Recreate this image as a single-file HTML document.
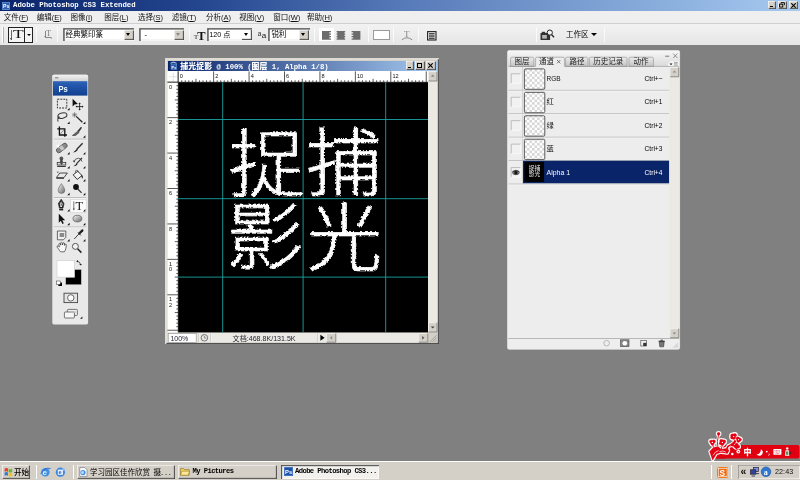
<!DOCTYPE html>
<html lang="zh-CN">
<head>
<meta charset="utf-8">
<title>Adobe Photoshop CS3 Extended</title>
<style>
*{box-sizing:border-box;margin:0;padding:0}
html,body{width:800px;height:480px;overflow:hidden;background:#808080}
#menubar,#optbar,#taskbar,#doc,#title,#chan,#tools,#ime,#docsvg{will-change:transform}
body{position:relative;font-family:"Liberation Sans","Noto Sans CJK SC",sans-serif;font-size:7.5px;color:#000;line-height:1}
.a{position:absolute}
.t{position:absolute;white-space:nowrap;line-height:1}
.mono{font-family:"Liberation Mono","Noto Sans CJK SC",monospace;font-weight:bold}
/* title */
#title{left:0;top:0;width:800px;height:11px;background:linear-gradient(90deg,#0a246a 0%,#24468f 25%,#5679b8 50%,#a6caf0 100%)}
.cbtn{position:absolute;background:#d4d0c8;box-shadow:inset 0.6px 0.6px 0 #fff,inset -0.6px -0.6px 0 #404040,inset -1.2px -1.2px 0 #808080}
#menubar{left:0;top:11px;width:800px;height:12.5px;background:#efefef;border-bottom:0.7px solid #cfcfcf}
#menubar .t{top:3px;margin-left:-0.8px;font-size:7.5px;color:#111}
#optbar{left:0;top:23.5px;width:800px;height:21.3px;background:linear-gradient(#f2f2f2,#e6e6e6)}
.sep{position:absolute;width:1.2px;background:linear-gradient(90deg,#b0b0b0 50%,#fafafa 50%)}
.combo{position:absolute;background:#fff;box-shadow:inset 0.8px 0.8px 0 #808080,inset 1.6px 1.6px 0 #404040,inset -0.7px -0.7px 0 #fff,inset -1.3px -1.3px 0 #d4d0c8}
.combo .dd{position:absolute;right:0.9px;top:1.6px;bottom:0.9px;width:9.8px;background:#d4d0c8;box-shadow:inset 0.6px 0.6px 0 #fff,inset -0.6px -0.6px 0 #404040,inset -1.2px -1.2px 0 #808080}
.combo .dd:after{content:"";position:absolute;left:2.2px;top:3.3px;border:2.7px solid transparent;border-top:3.1px solid #000;border-bottom:0}
.combo.dis .dd:after{border-top-color:#888}
/* taskbar */
#taskbar{left:0;top:460.5px;width:800px;height:19.5px;background:#d4d0c8;border-top:0.7px solid #fff}
.tb{position:absolute;top:3.2px;height:13.6px;background:#d4d0c8;box-shadow:inset 0.6px 0.6px 0 #fff,inset -0.6px -0.6px 0 #404040,inset -1.2px -1.2px 0 #808080}
.tb.act{background:#f2f1ee;box-shadow:inset 0.6px 0.6px 0 #404040,inset 1.2px 1.2px 0 #808080,inset -0.6px -0.6px 0 #fff}
.tsep{position:absolute;top:3px;height:14px;width:1.3px;background:linear-gradient(90deg,#808080 50%,#fff 50%)}
</style>
</head>
<body>
<!-- TITLE BAR -->
<div id="title" class="a">
  <svg class="a" style="left:2px;top:1.5px" width="8" height="8" viewBox="0 0 8 8"><rect width="8" height="8" fill="#2c5fb4"/><rect x=".4" y=".4" width="7.2" height="7.2" fill="none" stroke="#7fa8e0" stroke-width=".5"/><text x="1" y="6.2" font-family="Liberation Sans,sans-serif" font-size="5.2" font-weight="bold" fill="#fff">Ps</text></svg>
  <div class="t mono" style="left:13px;top:1.6px;font-size:7.3px;color:#fff">Adobe Photoshop CS3 Extended</div>
  <div class="cbtn" style="left:768px;top:1.3px;width:8.4px;height:8.1px"><div class="a" style="left:2px;top:5px;width:3.4px;height:1.2px;background:#000"></div></div>
  <div class="cbtn" style="left:777.6px;top:1.3px;width:9.4px;height:8.1px"><svg class="a" style="left:1.5px;top:1.2px" width="6" height="6" viewBox="0 0 6 6"><path d="M2 .6h3.4v2.6M2 .6v1" fill="none" stroke="#000" stroke-width=".9"/><rect x=".6" y="2.2" width="3.2" height="2.8" fill="none" stroke="#000" stroke-width=".9"/></svg></div>
  <div class="cbtn" style="left:789px;top:1.3px;width:9.2px;height:8.1px"><svg class="a" style="left:1.8px;top:1.5px" width="5" height="5" viewBox="0 0 5 5"><path d="M.3 .3L4.7 4.7M4.7 .3L.3 4.7" stroke="#000" stroke-width="1.1"/></svg></div>
</div>
<!-- MENU BAR -->
<div id="menubar" class="a">
  <div class="t" style="left:4.5px">文件(<u>F</u>)</div>
  <div class="t" style="left:37.5px">编辑(<u>E</u>)</div>
  <div class="t" style="left:71.2px">图像(<u>I</u>)</div>
  <div class="t" style="left:105px">图层(<u>L</u>)</div>
  <div class="t" style="left:138.7px">选择(<u>S</u>)</div>
  <div class="t" style="left:172.5px">滤镜(<u>T</u>)</div>
  <div class="t" style="left:206.7px">分析(<u>A</u>)</div>
  <div class="t" style="left:240px">视图(<u>V</u>)</div>
  <div class="t" style="left:274px">窗口(<u>W</u>)</div>
  <div class="t" style="left:307.7px">帮助(<u>H</u>)</div>
</div>
<!-- OPTIONS BAR -->
<div id="optbar" class="a">
  <div class="a" style="left:2px;top:2.5px;width:1.6px;height:16.5px;background:linear-gradient(90deg,#fff 50%,#b4b4b4 50%)"></div>
  <!-- tool preset picker -->
  <div class="a" style="left:8px;top:2.6px;width:25px;height:16.6px;border:0.8px solid #222;background:#f4f4f4"></div>
  <div class="a" style="left:24.4px;top:2.6px;width:0.8px;height:16.6px;background:#222"></div>
  <div class="t" style="left:13.200px;top:4.200px;font-family:'Liberation Serif',serif;font-size:12.600px;color:#111;transform:scaleX(1.38);transform-origin:0 0">T</div>
  <div class="a" style="left:11.400px;top:6.200px;width:0.900px;height:9.400px;background:#666"></div>
  <div class="a" style="left:10.400px;top:14px;border:1.400px solid transparent;border-top:2px solid #444;border-bottom:0"></div>
  <div class="a" style="left:26.600px;top:9.800px;border:2.200px solid transparent;border-top:2.600px solid #000;border-bottom:0"></div>
  <div class="sep" style="left:36.2px;top:2.800px;height:15.400px"></div>
  <!-- orientation toggle -->
  <div class="t" style="left:46.2px;top:6.4px;font-family:'Liberation Serif',serif;font-size:8px;color:#777">T</div>
  <div class="a" style="left:45.2px;top:7px;width:0.8px;height:6.4px;background:#888"></div>
  <div class="a" style="left:45.2px;top:13.2px;width:6px;height:0.8px;background:#888"></div>
  <div class="a" style="left:44.2px;top:12px;border:1.1px solid transparent;border-top:1.6px solid #777;border-bottom:0"></div>
  <div class="a" style="left:50.6px;top:12.5px;border:1.1px solid transparent;border-left:1.6px solid #777;border-right:0"></div>
  <div class="sep" style="left:57.3px;top:2.800px;height:15.400px"></div>
  <!-- font family -->
  <div class="combo" style="left:62.8px;top:4.4px;width:71.6px;height:12.4px"><div class="t" style="left:2.6px;top:2.6px;font-size:7.5px">经典繁印篆</div><div class="dd"></div></div>
  <div class="combo dis" style="left:139.4px;top:4.4px;width:45px;height:12.4px"><div class="t" style="left:5px;top:2.4px;font-size:7.5px">-</div><div class="dd"></div></div>
  <div class="sep" style="left:189px;top:2.800px;height:15.400px"></div>
  <!-- size -->
  <div class="t" style="left:193.800px;top:10.200px;font-family:'Liberation Serif',serif;font-weight:bold;font-size:7px;color:#666">T</div>
  <div class="t" style="left:197.200px;top:5.600px;font-family:'Liberation Serif',serif;font-weight:bold;font-size:12.400px;color:#111">T</div>
  <div class="combo" style="left:206.6px;top:4.4px;width:45.8px;height:12.4px"><div class="t" style="left:2.600px;top:2.600px;font-size:7.200px">120 点</div><div class="dd" style="background:#fff;box-shadow:inset -0.700px -0.700px 0 #404040,inset -1.300px -1.300px 0 #909090"></div></div>
  <!-- aa -->
  <div class="t" style="left:257.800px;top:7px;font-size:6.400px;color:#222">a</div>
  <div class="t" style="left:261.700px;top:7.600px;font-size:8px;color:#111">a</div>
  <div class="combo" style="left:268.2px;top:4.4px;width:41.6px;height:12.4px"><div class="t" style="left:3.2px;top:2.6px;font-size:7.5px">锐利</div><div class="dd"></div></div>
  <div class="sep" style="left:313.6px;top:2.800px;height:15.400px"></div>
  <!-- align -->
  <div class="a" style="left:318.800px;top:4.200px;width:15.400px;height:12.800px;background:#fff"></div>
  <svg class="a" style="left:322px;top:7px" width="40" height="9" viewBox="0 0 40 9"><g fill="#6c6c6c"><path d="M0.00 0.00h9.00v1.250h-9.00zM0.00 1.25h7.40v1.250h-7.40zM0.00 2.50h9.00v1.250h-9.00zM0.00 3.75h7.40v1.250h-7.40zM0.00 5.00h9.00v1.250h-9.00zM0.00 6.25h7.40v1.250h-7.40zM0.00 7.50h9.00v1.250h-9.00z"/><path d="M14.60 0.00h8.60v1.250h-8.60zM15.40 1.25h7.00v1.250h-7.00zM14.60 2.50h8.60v1.250h-8.60zM15.40 3.75h7.00v1.250h-7.00zM14.60 5.00h8.60v1.250h-8.60zM15.40 6.25h7.00v1.250h-7.00zM14.60 7.50h8.60v1.250h-8.60z"/><path d="M29.60 0.00h8.80v1.250h-8.80zM31.20 1.25h7.20v1.250h-7.20zM29.60 2.50h8.80v1.250h-8.80zM31.20 3.75h7.20v1.250h-7.20zM29.60 5.00h8.80v1.250h-8.80zM31.20 6.25h7.20v1.250h-7.20zM29.60 7.50h8.80v1.250h-8.80z"/></g></svg>
  <div class="sep" style="left:368.200px;top:2.800px;height:15.400px"></div>
  <!-- color -->
  <div class="a" style="left:373px;top:5.600px;width:17px;height:10.600px;background:#fff;border:0.800px solid #9a9a9a"></div>
  <div class="sep" style="left:393.200px;top:2.800px;height:15.400px"></div>
  <!-- warp -->
  <svg class="a" style="left:401px;top:6px" width="12" height="11" viewBox="0 0 12 11"><path d="M.8 9.800Q6 5.800 11.200 9.800" fill="none" stroke="#888" stroke-width="1"/><text x="2.900" y="7.400" font-family="Liberation Serif,serif" font-size="9" fill="#858585">T</text></svg>
  <div class="sep" style="left:418.200px;top:2.800px;height:15.400px"></div>
  <!-- palettes -->
  <svg class="a" style="left:426.600px;top:6.600px" width="10" height="10" viewBox="0 0 10 10"><rect x=".6" y=".6" width="8.400" height="8.400" fill="#e8e8e8" stroke="#222" stroke-width="1.100"/><path d="M2 2.600h5.600M2 4.200h5.600M2 5.800h5.600M2 7.400h5.600" stroke="#222" stroke-width=".9"/></svg>
  <div class="sep" style="left:535.600px;top:2.800px;height:15.400px"></div>
  <!-- bridge/workspace -->
  <svg class="a" style="left:540px;top:5.400px" width="15" height="12" viewBox="0 0 15 12"><rect x=".5" y="4" width="9.600" height="7" fill="#333"/><rect x="1.800" y="2.800" width="3.400" height="1.600" fill="#333"/><rect x="2.200" y="6" width="4.600" height="3.600" fill="#b8b8b8"/><circle cx="9.800" cy="3.600" r="2.600" fill="#f4f4f4" stroke="#222" stroke-width="1"/><path d="M11.600 5.600l2.400 2.600" stroke="#222" stroke-width="1.400"/></svg>
  <div class="t" style="left:566px;top:7px;font-size:7.500px">工作区</div>
  <div class="a" style="left:591px;top:9.400px;border:3.300px solid transparent;border-top:3.600px solid #000;border-bottom:0"></div>
  <div class="sep" style="left:604.200px;top:2.800px;height:15.400px"></div>
</div>
<!-- TOOLS -->
<div id="tools" class="a" style="left:52px;top:74px;width:37px;height:251px">
<svg class="a" style="left:0;top:0" width="37" height="251" viewBox="52 74 37 251">
<defs>
<linearGradient id="psb" x1="0" y1="0" x2="0" y2="1"><stop offset="0" stop-color="#2f63b8"/><stop offset=".5" stop-color="#1d4fa4"/><stop offset="1" stop-color="#12408e"/></linearGradient>
<linearGradient id="gry" x1="0" y1="0" x2="1" y2="1"><stop offset="0" stop-color="#f4f4f4"/><stop offset="1" stop-color="#6a6a6a"/></linearGradient>
<linearGradient id="grip" x1="0" y1="0" x2="0" y2="1"><stop offset="0" stop-color="#f2f2f2"/><stop offset="1" stop-color="#d2d2d2"/></linearGradient>
</defs>
<rect x="52.3" y="74.8" width="35.8" height="249.6" rx="1.6" fill="#e9e9e9"/>
<rect x="52.3" y="74.8" width="35.8" height="6.6" rx="1.6" fill="url(#grip)"/>
<rect x="55" y="77.2" width="3.4" height="1.2" fill="#8a8a8a"/>
<rect x="53" y="81.2" width="34.4" height="14.4" fill="url(#psb)"/>
<text x="58.400" y="92.200" font-family="Liberation Sans,sans-serif" font-weight="bold" font-size="9.200" fill="#f4f8ff" textLength="9.300" lengthAdjust="spacingAndGlyphs">Ps</text>
<!-- separators -->
<g stroke="#a6a6a6" stroke-width=".8"><path d="M54 139.200h32.400M54 197.600h32.400M54 227h32.400"/></g>
<g stroke="#fbfbfb" stroke-width=".7"><path d="M54 140h32.4M54 198.4h32.4M54 227.8h32.4"/></g>
<!-- selected type tool bg -->
<rect x="70.6" y="199.4" width="15.8" height="12.8" fill="#fbfbfb" stroke="#cfcfcf" stroke-width=".5"/>
<g fill="#111"><path d="M69.6 107.85v2.300h-2.300z"/><path d="M69.6 121.60v2.300h-2.300z"/><path d="M85.4 121.60v2.300h-2.300z"/><path d="M85.4 135.35v2.300h-2.300z"/><path d="M69.6 152.10v2.300h-2.300z"/><path d="M85.4 152.10v2.300h-2.300z"/><path d="M69.6 166.10v2.300h-2.300z"/><path d="M85.4 166.10v2.300h-2.300z"/><path d="M69.6 179.10v2.300h-2.300z"/><path d="M85.4 179.10v2.300h-2.300z"/><path d="M69.6 192.85v2.300h-2.300z"/><path d="M85.4 192.85v2.300h-2.300z"/><path d="M69.6 209.10v2.300h-2.300z"/><path d="M85.4 209.10v2.300h-2.300z"/><path d="M69.6 222.85v2.300h-2.300z"/><path d="M85.4 222.85v2.300h-2.300z"/><path d="M69.6 239.10v2.300h-2.300z"/><path d="M85.4 239.10v2.300h-2.300z"/><path d="M82.4 316.50v2.300h-2.300z"/></g>
<!-- row1: marquee, move -->
<rect x="57.4" y="99.2" width="9.4" height="8.8" fill="none" stroke="#333" stroke-width="1" stroke-dasharray="1.9 1.1"/>
<path d="M72.6 98.8v7.6l2-1.9 3.3-.4z" fill="#111"/>
<path d="M79.6 103.4v6.4M76.4 106.6h6.4" stroke="#222" stroke-width=".9"/>
<path d="M79.6 102.6l1.2 1.5h-2.4zM79.6 110.6l1.2-1.5h-2.4zM75.6 106.6l1.5-1.2v2.4zM83.6 106.6l-1.5-1.2v2.4z" fill="#222"/>
<!-- row2: lasso, wand -->
<ellipse cx="62.4" cy="115.6" rx="4.6" ry="2.7" transform="rotate(-14 62.4 115.6)" fill="none" stroke="#333" stroke-width="1"/>
<path d="M58.6 117.4q-1.4 1.6-.6 4.2" fill="none" stroke="#333" stroke-width="1"/>
<circle cx="58.7" cy="117.6" r="1" fill="none" stroke="#333" stroke-width=".6"/>
<path d="M76.2 116.4l6.2 5.8" stroke="#222" stroke-width="1.3"/>
<path d="M74.6 112.2v5.4M72 114.9h5.2M72.8 113.1l3.6 3.6M76.4 113.1l-3.6 3.6" stroke="#555" stroke-width=".6"/>
<!-- row3: crop, slice -->
<path d="M59.4 126.6v8.4h7.6M57.2 128.8h7.6v8" fill="none" stroke="#111" stroke-width="1.3"/>
<path d="M60 134.4l4.4-5" stroke="#444" stroke-width=".6"/>
<path d="M72.4 135.6l5.4-4.4 1.4 1.2-3.6 3z" fill="#666" stroke="#222" stroke-width=".5"/>
<path d="M77.4 131l3.6-4.2 1 .9-3 4.4z" fill="#333"/>
<!-- row4: heal, brush -->
<rect x="55.6" y="145.6" width="12.4" height="4.8" rx="2.4" transform="rotate(-38 61.8 148)" fill="#8a8a8a" stroke="#444" stroke-width=".7"/>
<rect x="60" y="145.8" width="3.6" height="4.4" transform="rotate(-38 61.8 148)" fill="#c8c8c8"/>
<path d="M56 146l2.6-1.4 .6 3.4z" fill="#fff"/>
<path d="M82.6 143.2l-6 6.2" stroke="#333" stroke-width="1.4"/>
<path d="M76.8 149l-3.6 3.4q2.6.2 4.6-2.4z" fill="#222"/>
<!-- row5: stamp, history brush -->
<circle cx="61.4" cy="158.4" r="1.9" fill="#555"/>
<path d="M60.4 159.6h2l.6 3h-3.2z" fill="#444"/>
<rect x="57.2" y="162.4" width="8.6" height="2.6" fill="#ddd" stroke="#222" stroke-width=".7"/>
<path d="M57.2 166.4h8.6" stroke="#222" stroke-width="1"/>
<path d="M60 163.2h3l-1.5 1.6z" fill="#111"/>
<path d="M82 157.8l-5.6 6" stroke="#333" stroke-width="1.2"/>
<path d="M76.8 163.4l-3.2 2.8q2.4.2 4-2z" fill="#222"/>
<path d="M74 161.8q1-3.6 4.4-3.6 3.2 0 3.6 3.4" fill="none" stroke="#444" stroke-width=".8"/>
<path d="M72.8 160.6l2.4.2-1 2z" fill="#333"/>
<!-- row6: eraser, bucket -->
<path d="M59.8 173h7.6l-3.4 4.6h-7.6z" fill="#e8e8e8" stroke="#222" stroke-width=".8"/>
<path d="M56.4 177.6h7.6v1.4h-7.6z" fill="#555"/>
<path d="M57 171.4l1.6 1.6M58.6 171.4l-1.6 1.6" stroke="#444" stroke-width=".5"/>
<path d="M73.2 174.8l4.6-3.6 4.2 4.4-4.8 3.8z" fill="#f4f4f4" stroke="#222" stroke-width=".9"/>
<path d="M75.4 172.8q-.6-2.8 1.6-2.6 1.600 .2 1.200 2.4" fill="none" stroke="#333" stroke-width=".6"/>
<path d="M81.400 174.600q2 1.200 1.400 4.400-1.800-1.200-1.400-4.400z" fill="#111"/>
<!-- row7: blur, dodge -->
<path d="M61.4 183.600q-3.400 4.600-3.400 6.600a3.400 3.200 0 0 0 6.800 0q0-2-3.400-6.600z" fill="url(#gry)" stroke="#666" stroke-width=".6"/>
<circle cx="76" cy="187" r="2.900" fill="#111"/>
<path d="M77.800 189l3.800 3.800" stroke="#333" stroke-width="1.200"/>
<!-- row8: pen, type -->
<path d="M61.200 199.200l2.800 4.400-1 4.400h-3.600l-1-4.400z" fill="#2a2a2a" stroke="#111" stroke-width=".6"/>
<path d="M61.200 201.200l1.400 2.800-.7 3h-1.400l-.7-3z" fill="#f4f4f4"/>
<path d="M61.200 201v3.600" stroke="#222" stroke-width=".5"/><circle cx="61.200" cy="205" r=".7" fill="#222"/>
<path d="M59.200 208.600h4v1.800h-4z" fill="#222"/>
<text x="75.400" y="210.200" font-family="Liberation Serif,serif" font-size="12.500" fill="#111">T</text>
<path d="M73.800 201.400v8" stroke="#555" stroke-width=".8"/><path d="M72.800 208.600h2l-1 1.800z" fill="#444"/>
<!-- row9: path select, ellipse -->
<path d="M58.800 213.800v9l2.100-2 1.500 3.200 1.400-.7-1.500-3.100h2.900z" fill="#111"/>
<ellipse cx="77.400" cy="218.600" rx="4.400" ry="3.300" fill="url(#gry)" stroke="#555" stroke-width=".7"/>
<!-- row10: notes, eyedropper -->
<path d="M57.400 231h8.400v6.400l-2.400 2.400h-6z" fill="#f0f0f0" stroke="#444" stroke-width=".8"/>
<rect x="59.600" y="233" width="4.600" height="4" fill="#8a8a8a"/>
<path d="M82.400 230.400l-3 3" stroke="#222" stroke-width="2.200" stroke-linecap="round"/>
<path d="M79.600 233.200l-5.400 5.800" stroke="#444" stroke-width="1"/>
<path d="M78 232.600l2.800 2.800" stroke="#222" stroke-width="1"/>
<!-- row11: hand, zoom -->
<path d="M58.800 249.400q-2.400-2.600-1.600-3.400 1-.6 2.200 1l-.6-3q.6-1.200 1.500-.3l.5 1.500-.1-2.400q.8-1 1.600 0l.3 2.200.4-2q.9-.8 1.500.2v2.200l.7-1.200q.9-.4 1.100.6-.1 2.600-.6 4-.4 1.800-1.300 3h-3.800q-1-.9-1.800-2.400z" fill="#f8f8f8" stroke="#333" stroke-width=".7"/>
<circle cx="75.400" cy="246.400" r="3" fill="#f2f2f2" stroke="#555" stroke-width="1"/>
<path d="M77.600 248.800l3.800 3.800" stroke="#222" stroke-width="1.500"/>
<!-- swatches -->
<rect x="65.600" y="269.400" width="15.800" height="15.400" fill="#000" stroke="#d0d0d0" stroke-width=".6"/>
<rect x="57" y="260.600" width="17.400" height="16.600" fill="#fff" stroke="#d4d4d4" stroke-width=".8"/>
<path d="M77 261.200q3 .2 3.600 3.400" fill="none" stroke="#333" stroke-width=".8"/>
<path d="M76.200 261.200l1.800-1.300v2.600zM80.600 265.600l-1.400-1.600h2.800z" fill="#222"/>
<rect x="58.400" y="282.600" width="3.600" height="3.400" fill="#000"/>
<rect x="56.600" y="281" width="3.600" height="3.400" fill="#fff" stroke="#333" stroke-width=".5"/>
<!-- quick mask -->
<rect x="64" y="293.200" width="13.600" height="9.400" fill="#e4e4e4" stroke="#444" stroke-width=".9"/>
<circle cx="70.800" cy="297.900" r="3.200" fill="#fff" stroke="#444" stroke-width=".8"/>
<!-- screen mode -->
<rect x="67.400" y="309.400" width="10" height="6" rx=".8" fill="#efefef" stroke="#555" stroke-width=".8"/>
<rect x="64.400" y="312" width="10" height="6" rx=".8" fill="#f6f6f6" stroke="#555" stroke-width=".8"/>
<rect x="69.600" y="311.400" width="6.400" height="1.200" fill="#bbb"/>
</svg>
</div>
<!-- DOC -->
<div id="doc" class="a" style="left:165px;top:58px;width:274.4px;height:285.6px;background:#d4d0c8;box-shadow:inset 0.7px 0.7px 0 #d4d0c8,inset 1.3px 1.3px 0 #fff,inset -0.7px -0.7px 0 #404040,inset -1.3px -1.3px 0 #808080">
<div class="a" style="left:2.5px;top:2.5px;width:269.4px;height:10.4px;background:linear-gradient(90deg,#0a246a,#a6caf0)"></div>
<svg class="a" style="left:4px;top:3.4px" width="9" height="9" viewBox="0 0 9 9"><path d="M1.400 1.800l3.200-1.200 3 1.200v1l-3-1-3.200 1z" fill="#9cc4f0"/><rect x="2" y="3" width="5.800" height="5.400" fill="#2a5cb0" stroke="#8fb6e8" stroke-width=".4"/><text x="2.600" y="7.600" font-family="Liberation Sans,sans-serif" font-size="3.800" font-weight="bold" fill="#fff">Ps</text></svg>
<div class="t mono" style="left:15.2px;top:4px;font-size:7.3px;color:#fff"><span style="font-family:'Noto Sans CJK SC',sans-serif;font-weight:900;font-size:7.900px;letter-spacing:0.100px">捕光捉影</span> @ 100% (<span style="font-family:'Noto Sans CJK SC',sans-serif;font-weight:900;font-size:7.900px">图层</span> 1, Alpha 1/8)</div>
<div class="cbtn" style="left:240.600px;top:3.400px;width:8.800px;height:8.200px"><div class="a" style="left:2px;top:5.200px;width:3.400px;height:1.200px;background:#000"></div></div>
<div class="cbtn" style="left:250.400px;top:3.400px;width:9.200px;height:8.200px"><div class="a" style="left:1.700px;top:1.500px;width:5.400px;height:5px;border:0.600px solid #000;border-top-width:1.300px"></div></div>
<div class="cbtn" style="left:261.200px;top:3.400px;width:9.600px;height:8.200px"><svg class="a" style="left:2.200px;top:1.600px" width="5" height="5" viewBox="0 0 5 5"><path d="M.3 .3L4.700 4.700M4.700 .3L.3 4.700" stroke="#000" stroke-width="1.100"/></svg></div>
</div>
<svg id="docsvg" class="a" style="left:167px;top:70px" width="272" height="274" viewBox="167 70 272 274">
<rect x="167.500" y="71" width="260.500" height="11.200" fill="#fff"/>
<rect x="167.500" y="71" width="10.700" height="261.500" fill="#fff"/>
<path d="M167.500 82.100h260.300M178.100 71v261.400" stroke="#333" stroke-width=".5"/>
<path d="M169.400 76.800h8.600M173.200 73v9" stroke="#999" stroke-width=".5" stroke-dasharray=".6 .6"/>
<path d="M178.20 71.40v10.60M181.74 80.30v1.70M185.29 80.30v1.70M188.83 80.30v1.70M192.37 80.30v1.70M195.92 78.80v3.20M199.46 80.30v1.70M203.00 80.30v1.70M206.55 80.30v1.70M210.09 80.30v1.70M213.63 71.40v10.60M217.18 80.30v1.70M220.72 80.30v1.70M224.26 80.30v1.70M227.81 80.30v1.70M231.35 78.80v3.20M234.89 80.30v1.70M238.44 80.30v1.70M241.98 80.30v1.70M245.52 80.30v1.70M249.07 71.40v10.60M252.61 80.30v1.70M256.15 80.30v1.70M259.70 80.30v1.70M263.24 80.30v1.70M266.78 78.80v3.20M270.33 80.30v1.70M273.87 80.30v1.70M277.42 80.30v1.70M280.96 80.30v1.70M284.50 71.40v10.60M288.05 80.30v1.70M291.59 80.30v1.70M295.13 80.30v1.70M298.68 80.30v1.70M302.22 78.80v3.20M305.76 80.30v1.70M309.31 80.30v1.70M312.85 80.30v1.70M316.39 80.30v1.70M319.94 71.40v10.60M323.48 80.30v1.70M327.02 80.30v1.70M330.57 80.30v1.70M334.11 80.30v1.70M337.65 78.80v3.20M341.20 80.30v1.70M344.74 80.30v1.70M348.28 80.30v1.70M351.83 80.30v1.70M355.37 71.40v10.60M358.91 80.30v1.70M362.46 80.30v1.70M366.00 80.30v1.70M369.54 80.30v1.70M373.09 78.80v3.20M376.63 80.30v1.70M380.17 80.30v1.70M383.72 80.30v1.70M387.26 80.30v1.70M390.80 71.40v10.60M394.35 80.30v1.70M397.89 80.30v1.70M401.43 80.30v1.70M404.98 80.30v1.70M408.52 78.80v3.20M412.06 80.30v1.70M415.61 80.30v1.70M419.15 80.30v1.70M422.69 80.30v1.70M426.24 71.40v10.60" stroke="#111" stroke-width=".7" fill="none"/>
<path d="M167.40 82.20h10.60M176.30 85.74h1.70M176.30 89.29h1.70M176.30 92.83h1.70M176.30 96.37h1.70M174.80 99.92h3.20M176.30 103.46h1.70M176.30 107.00h1.70M176.30 110.55h1.70M176.30 114.09h1.70M167.40 117.63h10.60M176.30 121.18h1.70M176.30 124.72h1.70M176.30 128.26h1.70M176.30 131.81h1.70M174.80 135.35h3.20M176.30 138.89h1.70M176.30 142.44h1.70M176.30 145.98h1.70M176.30 149.52h1.70M167.40 153.07h10.60M176.30 156.61h1.70M176.30 160.15h1.70M176.30 163.70h1.70M176.30 167.24h1.70M174.80 170.78h3.20M176.30 174.33h1.70M176.30 177.87h1.70M176.30 181.42h1.70M176.30 184.96h1.70M167.40 188.50h10.60M176.30 192.05h1.70M176.30 195.59h1.70M176.30 199.13h1.70M176.30 202.68h1.70M174.80 206.22h3.20M176.30 209.76h1.70M176.30 213.31h1.70M176.30 216.85h1.70M176.30 220.39h1.70M167.40 223.94h10.60M176.30 227.48h1.70M176.30 231.02h1.70M176.30 234.57h1.70M176.30 238.11h1.70M174.80 241.65h3.20M176.30 245.20h1.70M176.30 248.74h1.70M176.30 252.28h1.70M176.30 255.83h1.70M167.40 259.37h10.60M176.30 262.91h1.70M176.30 266.46h1.70M176.30 270.00h1.70M176.30 273.54h1.70M174.80 277.09h3.20M176.30 280.63h1.70M176.30 284.17h1.70M176.30 287.72h1.70M176.30 291.26h1.70M167.40 294.80h10.60M176.30 298.35h1.70M176.30 301.89h1.70M176.30 305.43h1.70M176.30 308.98h1.70M174.80 312.52h3.20M176.30 316.06h1.70M176.30 319.61h1.70M176.30 323.15h1.70M176.30 326.69h1.70M167.40 330.24h10.60" stroke="#111" stroke-width=".7" fill="none"/>
<g font-family="Liberation Sans,sans-serif" font-size="5.600" fill="#111"><text x="179.80" y="78">0</text><text x="215.23" y="78">2</text><text x="250.67" y="78">4</text><text x="286.10" y="78">6</text><text x="321.54" y="78">8</text><text x="356.97" y="78">10</text><text x="392.40" y="78">12</text> <text x="169" y="88.80">0</text><text x="169" y="124.23">2</text><text x="169" y="159.67">4</text><text x="169" y="195.10">6</text><text x="169" y="230.54">8</text><text x="169" y="265.97">1</text><text x="169" y="271.17">0</text><text x="169" y="301.40">1</text><text x="169" y="306.60">2</text></g>
<rect x="178.200" y="82.200" width="249.800" height="250.200" fill="#000"/>
<g stroke="#1ba3a3" stroke-width=".9"><path d="M222.700 82.200v250.200M303.100 82.200v250.200M385.700 82.200v250.200M178.200 119.500h249.800M178.200 198.700h249.800M178.200 277.100h249.800"/></g>
<filter id="rip" x="0" y="0" width="100%" height="100%" filterUnits="objectBoundingBox"><feTurbulence type="turbulence" baseFrequency="0.32" numOctaves="1" seed="3" result="n"/><feDisplacementMap in="SourceGraphic" in2="n" scale="1.800" xChannelSelector="R" yChannelSelector="G"/></filter>
<g font-family="Noto Sans CJK SC,sans-serif" font-weight="300" font-size="74" fill="#fff" stroke="#fff" stroke-width=".7" stroke-linejoin="round" stroke-linecap="round" filter="url(#rip)">
<text x="228" y="189.600" textLength="76.400" lengthAdjust="spacingAndGlyphs">捉</text>
<text x="305" y="189.400" textLength="76.400" lengthAdjust="spacingAndGlyphs">捕</text>
<text x="225.400" y="263.400" textLength="77.400" lengthAdjust="spacingAndGlyphs">影</text>
<text x="306.200" y="263.800" textLength="75" lengthAdjust="spacingAndGlyphs">光</text>
</g>
<!-- v scrollbar -->
<rect x="428" y="71" width="9.400" height="261.400" fill="#ebe9e3"/>
<rect x="428" y="332.400" width="9.400" height="10" fill="#d4d0c8"/>
<g>
<rect x="428.200" y="71.400" width="9" height="9.800" fill="#d4d0c8"/><path d="M428.500 81v-9.300h8.400" fill="none" stroke="#fff" stroke-width=".6"/><path d="M428.500 81h8.500v-9.400" fill="none" stroke="#707070" stroke-width=".7"/>
<path d="M432.700 74.600l1.900 2.200h-3.800z" fill="#888"/>
<rect x="428.200" y="322.400" width="9" height="9.800" fill="#d4d0c8"/><path d="M428.500 332v-9.300h8.400" fill="none" stroke="#fff" stroke-width=".6"/><path d="M428.500 332h8.500v-9.400" fill="none" stroke="#707070" stroke-width=".7"/>
<path d="M432.700 328.600l1.900-2.200h-3.800z" fill="#444"/>
</g>
<!-- status -->
<rect x="167.500" y="333" width="260.500" height="9.600" fill="#ebe9e3"/>
<rect x="168.200" y="333.600" width="28" height="8.800" fill="#fff" stroke="#888" stroke-width=".6"/>
<text x="170.400" y="340.800" font-family="Liberation Sans,sans-serif" font-size="7" fill="#223">100%</text>
<circle cx="204.400" cy="337.800" r="3.300" fill="#e6e6e6" stroke="#777" stroke-width="1"/><path d="M204.400 335.800v2.200h2" fill="none" stroke="#777" stroke-width=".8"/>
<path d="M198.600 333.400v9M210.600 333.400v9M317.600 333.400v9" stroke="#aaa" stroke-width=".6"/><path d="M199.200 333.400v9M211.200 333.400v9M318.200 333.400v9" stroke="#fff" stroke-width=".6"/>
<text x="232.600" y="340.600" font-family="Liberation Sans,Noto Sans CJK SC,sans-serif" font-size="7" fill="#223" textLength="63" lengthAdjust="spacingAndGlyphs">文档:468.8K/131.5K</text>
<path d="M320.400 334.800l4.200 3-4.200 3z" fill="#000"/>
<rect x="326.200" y="333.200" width="9.800" height="9.200" fill="#d4d0c8"/><path d="M326.500 342.200v-8.700h9.200" fill="none" stroke="#fff" stroke-width=".6"/><path d="M326.500 342.200h9.300v-8.800" fill="none" stroke="#707070" stroke-width=".7"/>
<path d="M330 337.800l2.200-1.900v3.800z" fill="#888"/>
<rect x="418.400" y="333.200" width="9.600" height="9.200" fill="#d4d0c8"/><path d="M418.700 342.200v-8.700h9" fill="none" stroke="#fff" stroke-width=".6"/><path d="M418.700 342.200h9.100v-8.800" fill="none" stroke="#707070" stroke-width=".7"/>
<path d="M424.400 337.800l-2.200-1.900v3.800z" fill="#555"/>
<path d="M430 341.800l6.600-6.600M432.400 341.800l4.200-4.200M434.800 341.800l1.800-1.800" stroke="#888" stroke-width=".7"/>
</svg>
<!-- CHANNELS -->
<svg id="chan" class="a" style="left:506px;top:49px" width="176" height="302" viewBox="506 49 176 302">
<defs>
<pattern id="chk" x="524.400" y="69" width="5.100" height="5.100" patternUnits="userSpaceOnUse"><rect width="5.100" height="5.100" fill="#fff"/><rect width="2.550" height="2.550" fill="#d6d6d6"/><rect x="2.550" y="2.550" width="2.550" height="2.550" fill="#d6d6d6"/></pattern>
<linearGradient id="hd" x1="0" y1="0" x2="0" y2="1"><stop offset="0" stop-color="#f6f6f6"/><stop offset="1" stop-color="#dadada"/></linearGradient>
<linearGradient id="tabg" x1="0" y1="0" x2="0" y2="1"><stop offset="0" stop-color="#ececec"/><stop offset="1" stop-color="#c4c4c4"/></linearGradient>
</defs>
<rect x="507.600" y="50.600" width="172" height="298.600" rx="1.400" fill="#ededed" stroke="#f8f8f8" stroke-width=".6"/>
<rect x="508" y="51" width="171.200" height="15.400" fill="url(#hd)"/>
<!-- tabs -->
<g stroke="#8e8e8e" stroke-width=".6">
<path d="M510.600 66.400v-7.800q0-1.400 1.400-1.400h20.400q1.400 0 1.400 1.400v7.800z" fill="url(#tabg)"/>
<path d="M565.600 66.400v-7.800q0-1.400 1.400-1.400h19.600q1.400 0 1.400 1.400v7.800z" fill="url(#tabg)"/>
<path d="M589.400 66.400v-7.800q0-1.400 1.400-1.400h34.800q1.400 0 1.400 1.400v7.800z" fill="url(#tabg)"/>
<path d="M629 66.400v-7.800q0-1.400 1.400-1.400h21.600q1.400 0 1.400 1.400v7.800z" fill="url(#tabg)"/>
<path d="M508.200 66.400h27.400v-7.800q0-1.400 1.400-1.400h26q1.400 0 1.400 1.400v7.800h114.800" fill="#ededed"/>
</g>
<rect x="536" y="66" width="28" height="1.200" fill="#ededed"/>
<g font-family="Noto Sans CJK SC,sans-serif" font-size="7.500" fill="#222">
<text x="514.600" y="64.400">图层</text><text x="539" y="64.400">通道</text><text x="569.400" y="64.400">路径</text><text x="593.200" y="64.400">历史记录</text><text x="633.600" y="64.400">动作</text>
</g>
<path d="M557 60l3.400 3.400M560.400 60l-3.400 3.400" stroke="#444" stroke-width=".7"/>
<path d="M665.200 56.200h4" stroke="#777" stroke-width="1"/><path d="M673.200 53.600l4.200 4.400M677.400 53.600l-4.200 4.400" stroke="#777" stroke-width=".8"/>
<path d="M668 66v-2.600l2.600-2.400h8.400v5z" fill="#f2f2f2"/>
<path d="M669.600 63.600h2.800l-1.400 1.600z" fill="#111"/><path d="M674 62.400h3.800M674 63.800h3.800M674 65.200h3.800" stroke="#888" stroke-width=".7"/>
<!-- rows -->
<path d="M522.600 66.800v117" stroke="#c6c6c6" stroke-width=".7"/>
<path d="M508.500 90.34h160.700" stroke="#b2b2b2" stroke-width=".9"/><path d="M508.500 91.04h160.700" stroke="#fafafa" stroke-width=".6"/><rect x="511.200" y="73.80" width="9.400" height="9.600" fill="#f1f1f1"/><path d="M511.200 83.40v-9.600h9.400" fill="none" stroke="#a8a8a8" stroke-width=".7"/><path d="M511.200 83.40h9.400v-9.600" fill="none" stroke="#fdfdfd" stroke-width=".7"/><rect x="524.400" y="68.90" width="20.400" height="20.400" fill="url(#chk)" stroke="#4a4a4a" stroke-width=".9" rx="1.300"/><text x="546.600" y="81.00" font-family="Liberation Sans,Noto Sans CJK SC,sans-serif" font-size="6.500" fill="#111">RGB</text><text x="644.600" y="80.80" font-family="Liberation Sans,sans-serif" font-size="6.600" fill="#000">Ctrl+~</text><path d="M508.500 113.78h160.700" stroke="#b2b2b2" stroke-width=".9"/><path d="M508.500 114.48h160.700" stroke="#fafafa" stroke-width=".6"/><rect x="511.200" y="97.24" width="9.400" height="9.600" fill="#f1f1f1"/><path d="M511.200 106.84v-9.600h9.400" fill="none" stroke="#a8a8a8" stroke-width=".7"/><path d="M511.200 106.84h9.400v-9.600" fill="none" stroke="#fdfdfd" stroke-width=".7"/><rect x="524.400" y="92.34" width="20.400" height="20.400" fill="url(#chk)" stroke="#4a4a4a" stroke-width=".9" rx="1.300"/><text x="546.600" y="104.44" font-family="Liberation Sans,Noto Sans CJK SC,sans-serif" font-size="7.3" fill="#111">红</text><text x="644.600" y="104.24" font-family="Liberation Sans,sans-serif" font-size="6.600" fill="#000">Ctrl+1</text><path d="M508.500 137.22h160.700" stroke="#b2b2b2" stroke-width=".9"/><path d="M508.500 137.92h160.700" stroke="#fafafa" stroke-width=".6"/><rect x="511.200" y="120.68" width="9.400" height="9.600" fill="#f1f1f1"/><path d="M511.200 130.28v-9.600h9.400" fill="none" stroke="#a8a8a8" stroke-width=".7"/><path d="M511.200 130.28h9.400v-9.600" fill="none" stroke="#fdfdfd" stroke-width=".7"/><rect x="524.400" y="115.78" width="20.400" height="20.400" fill="url(#chk)" stroke="#4a4a4a" stroke-width=".9" rx="1.300"/><text x="546.600" y="127.88" font-family="Liberation Sans,Noto Sans CJK SC,sans-serif" font-size="7.3" fill="#111">绿</text><text x="644.600" y="127.68" font-family="Liberation Sans,sans-serif" font-size="6.600" fill="#000">Ctrl+2</text><path d="M508.500 160.66h160.700" stroke="#b2b2b2" stroke-width=".9"/><path d="M508.500 161.36h160.700" stroke="#fafafa" stroke-width=".6"/><rect x="511.200" y="144.12" width="9.400" height="9.600" fill="#f1f1f1"/><path d="M511.200 153.72v-9.600h9.400" fill="none" stroke="#a8a8a8" stroke-width=".7"/><path d="M511.200 153.72h9.400v-9.600" fill="none" stroke="#fdfdfd" stroke-width=".7"/><rect x="524.400" y="139.22" width="20.400" height="20.400" fill="url(#chk)" stroke="#4a4a4a" stroke-width=".9" rx="1.300"/><text x="546.600" y="151.32" font-family="Liberation Sans,Noto Sans CJK SC,sans-serif" font-size="7.3" fill="#111">蓝</text><text x="644.600" y="151.12" font-family="Liberation Sans,sans-serif" font-size="6.600" fill="#000">Ctrl+3</text><rect x="523" y="160.76" width="146.200" height="22.600" fill="#0a246a"/><path d="M508.500 184.10h160.700" stroke="#b2b2b2" stroke-width=".9"/><path d="M508.500 184.80h160.700" stroke="#fafafa" stroke-width=".6"/><rect x="511.200" y="167.56" width="9.400" height="9.600" fill="#f1f1f1"/><path d="M511.200 177.16v-9.600h9.400" fill="none" stroke="#a8a8a8" stroke-width=".7"/><path d="M511.200 177.16h9.400v-9.600" fill="none" stroke="#fdfdfd" stroke-width=".7"/><ellipse cx="515.900" cy="172.76" rx="3.300" ry="1.900" fill="#9a9a9a" stroke="#222" stroke-width=".7"/><circle cx="515.900" cy="172.66" r="1.700" fill="#111"/><path d="M512.400 171.56q3.500-2.600 7 0" fill="none" stroke="#222" stroke-width=".8"/><rect x="524.300" y="161.800" width="19.800" height="20.200" fill="#000"/><g font-family="Noto Sans CJK SC,sans-serif" font-size="5.800" fill="#d4d4d4" font-weight="500" transform="translate(-.7 -1.100)"><text x="529.400" y="170.76">捉捕</text><text x="529.400" y="176.96">影光</text></g><text x="546.600" y="174.76" font-family="Liberation Sans,Noto Sans CJK SC,sans-serif" font-size="6.9" fill="#fff">Alpha 1</text><text x="644.600" y="174.56" font-family="Liberation Sans,sans-serif" font-size="6.600" fill="#fff">Ctrl+4</text>
<!-- scrollbar -->
<rect x="669.400" y="66.800" width="9.800" height="271.600" fill="#ebe9e3"/>
<rect x="669.800" y="67.200" width="9.200" height="9.800" fill="#d4d0c8"/><path d="M670.100 76.800v-9.300h8.700" fill="none" stroke="#fff" stroke-width=".6"/><path d="M670.100 76.800h8.700v-9.400" fill="none" stroke="#707070" stroke-width=".7"/>
<path d="M674.400 70.600l1.700 2h-3.400z" fill="#888"/>
<rect x="669.800" y="328.400" width="9.200" height="9.600" fill="#d4d0c8"/><path d="M670.100 337.800v-9.100h8.700" fill="none" stroke="#fff" stroke-width=".6"/><path d="M670.100 337.800h8.700v-9.200" fill="none" stroke="#707070" stroke-width=".7"/>
<path d="M674.400 334.600l1.700-2h-3.400z" fill="#888"/>
<!-- footer -->
<path d="M508.200 338.600h171" stroke="#9a9a9a" stroke-width=".7"/>
<rect x="508.200" y="339" width="171" height="10" fill="#eeeeee"/>
<circle cx="606.600" cy="343.200" r="2.800" fill="none" stroke="#aaa" stroke-width=".8"/>
<rect x="620.600" y="339.800" width="8.400" height="6.800" fill="#8a8a8a" stroke="#444" stroke-width=".6"/><circle cx="624.800" cy="343.200" r="2.300" fill="#fff"/>
<rect x="640.800" y="340.400" width="5.600" height="5.600" fill="#f6f6f6" stroke="#555" stroke-width=".7"/><rect x="643.200" y="342.800" width="3.200" height="3.200" fill="#333"/>
<path d="M659.200 341.600h5l-.6 5.200h-3.800z" fill="#777" stroke="#333" stroke-width=".6"/><path d="M658.600 341.200h6.200M660.600 340.200h2.200" stroke="#222" stroke-width=".9"/>
<path d="M672.400 347.800l5.600-5.600v5.600z" fill="#d8d8d8"/>
</svg>
<!-- IME -->
<svg id="ime" class="a" style="left:704px;top:428px" width="96" height="34" viewBox="704 428 96 34">
<style>.o *{stroke:#fff;stroke-width:2.600px;stroke-linejoin:round;fill:#fff}.o .br{stroke-width:4.200px;fill:none}.o .st{stroke-width:2.600px;fill:none}.r *{fill:#e60012;stroke:#e60012;stroke-width:.3px}.r .br{stroke-width:2.200px;fill:none}.r .st{stroke-width:.9px;fill:none}</style>

<rect x="715.400" y="445" width="84" height="13.600" rx="2" fill="#e0000f"/>
<rect x="715.400" y="457" width="10" height="1.600" fill="#e0000f"/>
<g class="o"><path d="M709.600 451.400L712.600 460.200L716.600 453.800L721.200 452.600L727.600 453.400L729 450.200L726 448.400L721.400 449.200L717.800 446.400L713.400 447.400Z"/>
<path d="M727.400 451.600Q726.200 446.400 731 445Q734.400 443.800 735.400 440.400" fill="none" class="br"/>
<path d="M731 445Q735.200 445.200 737.200 448.600" fill="none" class="br"/>
<path d="M713.400 447.400L712.400 443.600M717.800 446.400L717.400 441.400L718.500 435M721.400 449.200L722.400 444" fill="none" class="st"/>
<circle cx="711.200" cy="441.600" r="1.700"/><circle cx="713.800" cy="441.400" r="1.700"/><circle cx="712.400" cy="443.600" r="1.700"/>
<circle cx="721.400" cy="441" r="1.800"/><circle cx="724" cy="441.600" r="1.800"/><circle cx="722.400" cy="443.600" r="1.800"/><circle cx="720.600" cy="443.400" r="1.400"/>
<circle cx="718.600" cy="433.800" r="1.500"/>
<circle cx="732.400" cy="435.600" r="1.800"/><circle cx="734.800" cy="435.200" r="1.800"/><circle cx="733.800" cy="437.800" r="1.800"/><circle cx="732" cy="437.600" r="1.500"/>
<circle cx="737.800" cy="438.400" r="1.700"/><circle cx="739.800" cy="439.600" r="1.700"/><circle cx="738.400" cy="440.800" r="1.700"/>
<circle cx="736.600" cy="444.600" r="1.600"/><circle cx="738.200" cy="446.600" r="1.600"/><circle cx="735.800" cy="446.800" r="1.400"/></g>
<g class="r"><path d="M709.600 451.400L712.600 460.200L716.600 453.800L721.200 452.600L727.600 453.400L729 450.200L726 448.400L721.400 449.200L717.800 446.400L713.400 447.400Z"/>
<path d="M727.400 451.600Q726.200 446.400 731 445Q734.400 443.800 735.400 440.400" fill="none" class="br"/>
<path d="M731 445Q735.200 445.200 737.200 448.600" fill="none" class="br"/>
<path d="M713.400 447.400L712.400 443.600M717.800 446.400L717.400 441.400L718.500 435M721.400 449.200L722.400 444" fill="none" class="st"/>
<circle cx="711.200" cy="441.600" r="1.700"/><circle cx="713.800" cy="441.400" r="1.700"/><circle cx="712.400" cy="443.600" r="1.700"/>
<circle cx="721.400" cy="441" r="1.800"/><circle cx="724" cy="441.600" r="1.800"/><circle cx="722.400" cy="443.600" r="1.800"/><circle cx="720.600" cy="443.400" r="1.400"/>
<circle cx="718.600" cy="433.800" r="1.500"/>
<circle cx="732.400" cy="435.600" r="1.800"/><circle cx="734.800" cy="435.200" r="1.800"/><circle cx="733.800" cy="437.800" r="1.800"/><circle cx="732" cy="437.600" r="1.500"/>
<circle cx="737.800" cy="438.400" r="1.700"/><circle cx="739.800" cy="439.600" r="1.700"/><circle cx="738.400" cy="440.800" r="1.700"/>
<circle cx="736.600" cy="444.600" r="1.600"/><circle cx="738.200" cy="446.600" r="1.600"/><circle cx="735.800" cy="446.800" r="1.400"/></g>
<path d="M713 455.400l2.600-3.400 3-1.400M719.400 451.600l3.400-.6 3 1M728.200 449.400q-.4-2.600 2.400-3.600" fill="none" stroke="#fff" stroke-width=".7"/>
<circle cx="712.400" cy="442.400" r=".7" fill="#fff"/><circle cx="722.400" cy="442.400" r=".7" fill="#fff"/><circle cx="733.600" cy="436.600" r=".7" fill="#fff"/><circle cx="738.600" cy="439.600" r=".6" fill="#fff"/>
<circle cx="732.300" cy="454" r="1.300" fill="#fff"/>
<circle cx="738.300" cy="451.600" r="1.900" fill="#fff"/><circle cx="738.300" cy="451.600" r=".7" fill="#e60012"/>
<text x="743.600" y="455.400" font-family="Noto Sans CJK SC,sans-serif" font-weight="900" font-size="8" fill="#fff">中</text>
<path d="M760.800 449.200a3.400 3.400 0 1 1-4.200 5a4.200 4.200 0 0 0 4.200-5z" fill="#fff"/>
<circle cx="766.800" cy="451.600" r=".9" fill="#fff"/><path d="M769 453.600q.8 1-.4 2" stroke="#fff" stroke-width=".9" fill="none"/>
<rect x="773.400" y="449" width="8" height="5.800" rx=".6" fill="#fff"/><path d="M774.600 450.600h5.600M774.600 452h5.600M775.600 453.400h3.600" stroke="#e60012" stroke-width=".6" stroke-dasharray=".9 .5"/>
<circle cx="787.200" cy="448.400" r="1.200" fill="#fff"/><path d="M785.600 450.200h3.200l.6 5.600h-4.400z" fill="#fff"/><path d="M789.400 454.600l2-2.800" stroke="#333" stroke-width="1.100"/><rect x="786" y="451.400" width="2.400" height="3.400" fill="#6a8a5a"/>
</svg>
<!-- TASKBAR -->
<div id="taskbar" class="a">
  <div class="tb" style="left:2px;width:28.200px"></div>
  <svg class="a" style="left:4.400px;top:4.600px" width="9" height="10" viewBox="0 0 9 10"><path d="M.6 1.600q1.800-1 3.400 0v3.200q-1.600-1-3.400 0z" fill="#e8432a"/><path d="M4.600 1.800q1.800 1 3.600 0v3.200q-1.800 1-3.600 0z" fill="#6bb536"/><path d="M.6 5.600q1.800-1 3.400 0v3.200q-1.600-1-3.400 0z" fill="#3a78d8"/><path d="M4.600 5.800q1.800 1 3.600 0v3.200q-1.800 1-3.600 0z" fill="#f4c21c"/></svg>
  <div class="t" style="left:14px;top:5.600px;font-size:7.600px;font-weight:500;font-family:'Noto Sans CJK SC',sans-serif">开始</div>
  <div class="tsep" style="left:35.600px"></div>
  <svg class="a" style="left:40.400px;top:4.400px" width="28" height="12" viewBox="0 0 28 12"><circle cx="5.400" cy="6.200" r="4.200" fill="#3f8ee0"/><text x="2.600" y="9" font-family="Liberation Sans,sans-serif" font-weight="bold" font-size="8" fill="#e8f2ff">e</text><path d="M.6 8.200q4-7.600 10-5.600" fill="none" stroke="#2a6ac8" stroke-width=".9"/>
  <circle cx="20.400" cy="6.200" r="4.600" fill="#3a86dc"/><rect x="17.800" y="3.600" width="5.200" height="5.200" fill="#e6f0fc"/><text x="18.600" y="8.400" font-family="Liberation Sans,sans-serif" font-weight="bold" font-size="5.600" fill="#2a6ac8">e</text><circle cx="23.600" cy="3.400" r="1.300" fill="#8cc0f4"/></svg>
  <div class="tsep" style="left:72.800px"></div>
  <div class="tb" style="left:77px;width:97.600px"></div>
  <svg class="a" style="left:79.400px;top:4.600px" width="9" height="10" viewBox="0 0 9 10"><path d="M.8 .6h5l2.200 2.200v6.600h-7.200z" fill="#fff" stroke="#667" stroke-width=".6"/><circle cx="4" cy="5.600" r="2.600" fill="#3f8ee0"/><text x="2.300" y="7.400" font-family="Liberation Sans,sans-serif" font-weight="bold" font-size="5" fill="#fff">e</text></svg>
  <div class="t" style="left:90px;top:5.800px;font-size:7.500px;font-family:'Noto Sans CJK SC',sans-serif;">学习园区佳作欣赏<span style="margin-left:3.600px">摄</span><span style="letter-spacing:1.700px">...</span></div>
  <div class="tb" style="left:178px;width:99.200px"></div>
  <svg class="a" style="left:180.400px;top:5.400px" width="10" height="9" viewBox="0 0 10 9"><path d="M.6 1.600h3l.8 1h4.800v5.600h-8.600z" fill="#f4d46a" stroke="#8a6a14" stroke-width=".6"/><path d="M.6 8.200l1.200-4h7.800l-1.400 4z" fill="#fbe89a" stroke="#8a6a14" stroke-width=".5"/></svg>
  <div class="t mono" style="left:192.600px;top:5.800px;font-size:7.200px;letter-spacing:-0.600px">My Pictures</div>
  <div class="tb act" style="left:280.600px;width:98px"></div>
  <svg class="a" style="left:284px;top:5px" width="9" height="9" viewBox="0 0 9 9"><rect width="9" height="9" fill="#1d50a6"/><rect x=".4" y=".4" width="8.200" height="8.200" fill="none" stroke="#6d9be0" stroke-width=".5"/><text x="1.100" y="6.900" font-family="Liberation Sans,sans-serif" font-size="5.800" font-weight="bold" fill="#fff">Ps</text></svg>
  <div class="t mono" style="left:295px;top:5.800px;font-size:7.200px;letter-spacing:-0.600px">Adobe Photoshop CS3...</div>
  <div class="tsep" style="left:710.600px"></div>
  <svg class="a" style="left:716.600px;top:5px" width="11.400" height="11" viewBox="0 0 11.400 11"><rect x=".5" y=".5" width="10.400" height="10" rx="1" fill="#fff" stroke="#f07a1a" stroke-width="1"/><rect x="1.600" y="1.600" width="8.200" height="7.800" fill="#f26a10"/><text x="2.600" y="8.600" font-family="Liberation Sans,sans-serif" font-weight="bold" font-size="8.400" fill="#fff">S</text></svg>
  <div class="tsep" style="left:730.800px"></div>
  <div class="a" style="left:737.800px;top:3.200px;width:62.200px;height:13.600px;box-shadow:inset 0.600px 0.600px 0 #808080,inset -0.600px -0.600px 0 #fff"></div>
  <div class="t" style="left:740.400px;top:4px;font-size:10.500px;font-weight:bold;color:#111">«</div>
  <svg class="a" style="left:749px;top:4.400px" width="23" height="12" viewBox="0 0 23 12"><rect x="4.400" y="1.400" width="5" height="4.200" fill="#7f94dc" stroke="#223" stroke-width=".7"/><rect x="1.600" y="3.800" width="5.200" height="4.400" fill="#34449a" stroke="#223" stroke-width=".7"/><path d="M2.600 10h3.400M7 7.600h3" stroke="#334" stroke-width=".9"/>
  <circle cx="17" cy="5.800" r="4.800" fill="#2f78d0" stroke="#1b4e9c" stroke-width=".6"/><text x="14.800" y="8.600" font-family="Liberation Serif,serif" font-weight="bold" font-size="8" fill="#fff">a</text></svg>
  <div class="t" style="left:775px;top:5.800px;font-size:7.200px;letter-spacing:0.050px;color:#111">22:43</div>
</div>
</body>
</html>
